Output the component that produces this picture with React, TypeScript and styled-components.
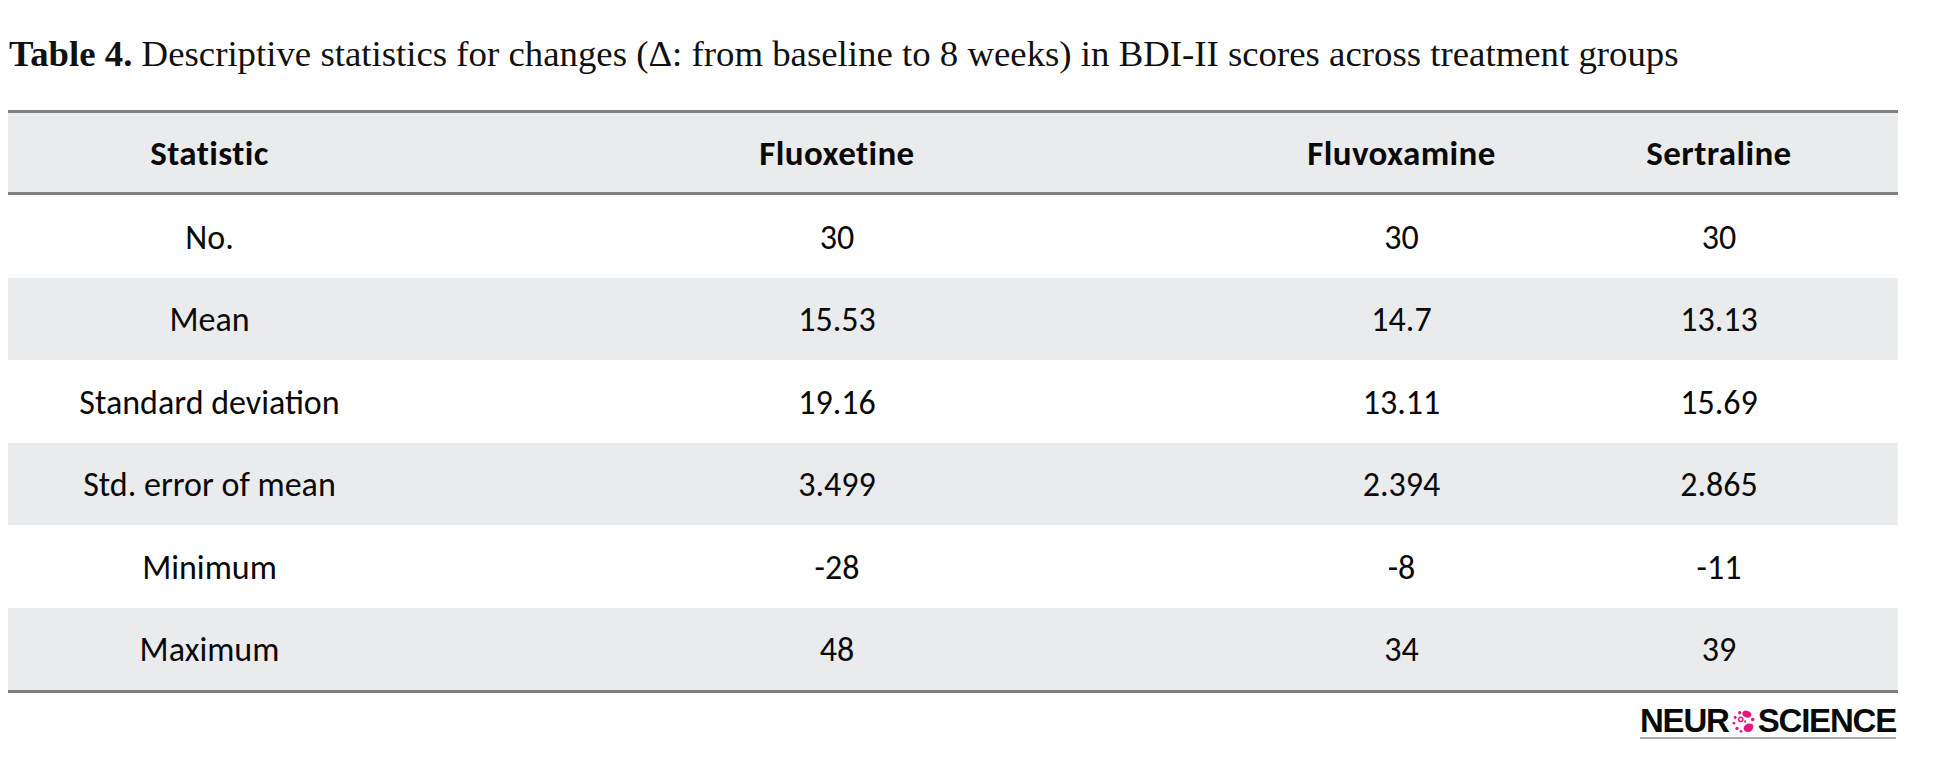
import React from "react";
import styled, { createGlobalStyle } from "styled-components";

const GlobalStyle = createGlobalStyle`
  html, body {
    margin: 0;
    padding: 0;
    background: #ffffff;
  }
`;

const Page = styled.div`
  width: 1890px;
  padding-left: 8px;
  display: flex;
  flex-direction: column;
`;

const Caption = styled.p`
  margin: 0 0 34px 0;
  padding: 32px 0 0 1px;
  font-family: "Liberation Serif", "DejaVu Serif", serif;
  font-size: 36.8px;
  line-height: 44px;
  color: #111;
  white-space: nowrap;
`;

const CaptionLabel = styled.b`
  font-weight: 700;
`;

const Table = styled.div`
  display: flex;
  flex-direction: column;
  border-top: 3px solid #808080;
  border-bottom: 3px solid #808080;
  font-family: "Carlito", "Lato", "Open Sans", sans-serif;
  color: #0a0a0a;
`;

const COLS = "403px 852px 277px 358px";

const HeaderRow = styled.div`
  display: grid;
  grid-template-columns: ${COLS};
  align-items: center;
  height: 79px;
  background: #eaebed;
  border-bottom: 3px solid #808080;
  font-weight: 700;
`;

const Row = styled.div<{ $shaded?: boolean }>`
  display: grid;
  grid-template-columns: ${COLS};
  align-items: center;
  height: 82.5px;
  padding-top: 3px;
  box-sizing: border-box;
  background: ${(p) => (p.$shaded ? "#eaebed" : "#ffffff")};
`;

const Cell = styled.div<{ $head?: boolean }>`
  text-align: center;
  font-size: ${(p) => (p.$head ? "35px" : "34px")};
  letter-spacing: ${(p) => (p.$head ? "0.4px" : "0")};
  line-height: 42px;
  white-space: nowrap;
`;

const Footer = styled.div`
  display: flex;
  justify-content: flex-end;
  padding-right: 2px;
  margin-top: 12px;
`;

const Logo = styled.div`
  display: inline-flex;
  align-items: center;
  border-bottom: 2px solid #aaaaaa;
  font-family: "Liberation Sans", Arial, sans-serif;
  font-weight: 700;
  font-size: 33px;
  line-height: 32px;
  letter-spacing: -1.2px;
  color: #0b0b0b;
`;

const LogoMark = styled.svg`
  width: 23px;
  height: 23px;
  margin: 0 3px 0 3px;
  flex: none;
`;

const NeuronMark = () => (
  <LogoMark viewBox="0 0 22 22" aria-hidden="true">
    <g fill="#e5167f">
      <ellipse cx="14.2" cy="4" rx="4.4" ry="3.2" transform="rotate(20 14.2 4)" />
      <circle cx="7.4" cy="2.6" r="1.6" />
      <circle cx="3" cy="7.2" r="1.4" />
      <circle cx="1.8" cy="12.6" r="1.3" />
      <circle cx="19.8" cy="9" r="1.7" />
      <circle cx="12.6" cy="11" r="1.1" />
      <path d="M11.2 17.5 C11.5 13.4 16.2 12 19.3 13.4 C21.4 14.9 20.2 19.9 16.7 20.9 C13.8 21.7 11 20.5 11.2 17.5 Z" />
      <circle cx="4.8" cy="17.6" r="1.6" />
      <circle cx="8.6" cy="20.4" r="1.3" />
    </g>
    <circle cx="8.4" cy="9" r="2" fill="none" stroke="#e5167f" strokeWidth="1.4" />
  </LogoMark>
);

const headers = ["Statistic", "Fluoxetine", "Fluvoxamine", "Sertraline"];

const rows: string[][] = [
  ["No.", "30", "30", "30"],
  ["Mean", "15.53", "14.7", "13.13"],
  ["Standard deviation", "19.16", "13.11", "15.69"],
  ["Std. error of mean", "3.499", "2.394", "2.865"],
  ["Minimum", "-28", "-8", "-11"],
  ["Maximum", "48", "34", "39"],
];

export default function App() {
  return (
    <>
      <GlobalStyle />
      <Page>
        <Caption>
          <CaptionLabel>Table 4.</CaptionLabel> Descriptive statistics for changes (Δ: from baseline to 8 weeks) in
          BDI-II scores across treatment groups
        </Caption>
        <Table>
          <HeaderRow>
            {headers.map((h) => (
              <Cell key={h} $head>
                {h}
              </Cell>
            ))}
          </HeaderRow>
          {rows.map((r, i) => (
            <Row key={r[0]} $shaded={i % 2 === 1}>
              {r.map((c, j) => (
                <Cell key={j}>{c}</Cell>
              ))}
            </Row>
          ))}
        </Table>
        <Footer>
          <Logo>
            <span>NEUR</span>
            <NeuronMark />
            <span>SCIENCE</span>
          </Logo>
        </Footer>
      </Page>
    </>
  );
}
